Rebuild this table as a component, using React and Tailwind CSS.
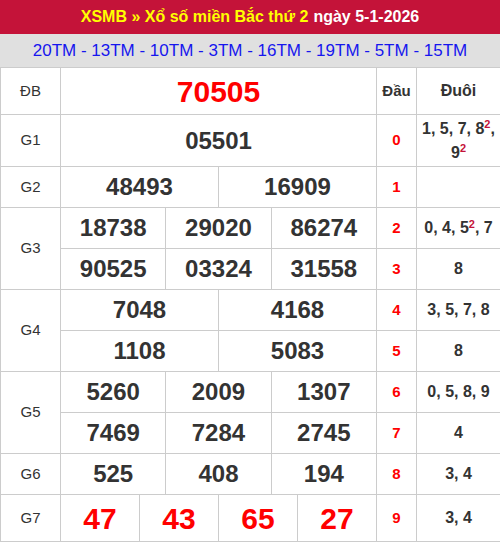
import React from "react";

const font = { fontFamily: '"Liberation Sans", Arial, sans-serif' };

const rows = [
  { label: "G1", nums: ["05501"], h: "h-[52px]", dau: "0", duoi: "g1" },
  { label: "G2", nums: ["48493", "16909"], h: "h-[41px]", dau: "1", duoi: "" },
];

function Sup({ children }) {
  return <sup className="text-[11px] text-[#c41339] font-bold">{children}</sup>;
}

function Duoi({ k }) {
  if (k === "g1")
    return (
      <span className="leading-[20px]">
        1, 5, 7, 8<Sup>2</Sup>,<br />9<Sup>2</Sup>
      </span>
    );
  if (k === "d2")
    return (
      <span>
        0, 4, 5<Sup>2</Sup>, 7
      </span>
    );
  return <span>{k}</span>;
}

const cell = "border border-[#cccccc] text-center align-middle p-0";
const label = cell + " text-[15px] text-[#333333]";
const num = cell + " text-[24px] font-bold text-[#333333]";
const dau = cell + " text-[15px] font-bold text-[#ff0000]";
const duoi = cell + " text-[16px] font-bold text-[#333333]";

function NumCells({ nums }) {
  const span = 12 / nums.length;
  return nums.map((n, i) => (
    <td key={i} colSpan={span} className={num}>
      {n}
    </td>
  ));
}

export default function App() {
  return (
    <div className="w-[500px] bg-white" style={font}>
      <div className="h-[34px] bg-[#c41339] flex items-center justify-center text-[16px] font-bold">
        <span className="text-[#ffff00]">XSMB » Xổ số miền Bắc thứ 2</span>
        <span className="text-white ml-[5px]">ngày 5-1-2026</span>
      </div>
      <div className="h-[33px] bg-[#e0e0e0] flex items-center justify-center text-[17px] text-[#1616ee]">
        20TM - 13TM - 10TM - 3TM - 16TM - 19TM - 5TM - 15TM
      </div>
      <table className="w-[500px] table-fixed border-collapse">
        <colgroup>
          <col className="w-[60px]" />
          {Array.from({ length: 12 }).map((_, i) => (
            <col key={i} className="w-[26.333px]" />
          ))}
          <col className="w-[40px]" />
          <col className="w-[84px]" />
        </colgroup>
        <tbody>
          <tr className="h-[47px]">
            <td className={label}>ĐB</td>
            <td colSpan={12} className={cell + " text-[30px] font-bold text-[#ff0000]"}>
              70505
            </td>
            <td className={cell + " text-[15px] font-bold text-[#333333]"}>Đầu</td>
            <td className={cell + " text-[16px] font-bold text-[#333333]"}>Đuôi</td>
          </tr>
          {rows.map((r) => (
            <tr key={r.label} className={r.h}>
              <td className={label}>{r.label}</td>
              <NumCells nums={r.nums} />
              <td className={dau}>{r.dau}</td>
              <td className={duoi}>
                <Duoi k={r.duoi} />
              </td>
            </tr>
          ))}
          <tr className="h-[41px]">
            <td rowSpan={2} className={label}>G3</td>
            <NumCells nums={["18738", "29020", "86274"]} />
            <td className={dau}>2</td>
            <td className={duoi}>
              <Duoi k="d2" />
            </td>
          </tr>
          <tr className="h-[41px]">
            <NumCells nums={["90525", "03324", "31558"]} />
            <td className={dau}>3</td>
            <td className={duoi}>8</td>
          </tr>
          <tr className="h-[41px]">
            <td rowSpan={2} className={label}>G4</td>
            <NumCells nums={["7048", "4168"]} />
            <td className={dau}>4</td>
            <td className={duoi}>3, 5, 7, 8</td>
          </tr>
          <tr className="h-[41px]">
            <NumCells nums={["1108", "5083"]} />
            <td className={dau}>5</td>
            <td className={duoi}>8</td>
          </tr>
          <tr className="h-[41px]">
            <td rowSpan={2} className={label}>G5</td>
            <NumCells nums={["5260", "2009", "1307"]} />
            <td className={dau}>6</td>
            <td className={duoi}>0, 5, 8, 9</td>
          </tr>
          <tr className="h-[41px]">
            <NumCells nums={["7469", "7284", "2745"]} />
            <td className={dau}>7</td>
            <td className={duoi}>4</td>
          </tr>
          <tr className="h-[41px]">
            <td className={label}>G6</td>
            <NumCells nums={["525", "408", "194"]} />
            <td className={dau}>8</td>
            <td className={duoi}>3, 4</td>
          </tr>
          <tr className="h-[47px]">
            <td className={label}>G7</td>
            {["47", "43", "65", "27"].map((n) => (
              <td key={n} colSpan={3} className={cell + " text-[30px] font-bold text-[#ff0000]"}>
                {n}
              </td>
            ))}
            <td className={dau}>9</td>
            <td className={duoi}>3, 4</td>
          </tr>
        </tbody>
      </table>
    </div>
  );
}
